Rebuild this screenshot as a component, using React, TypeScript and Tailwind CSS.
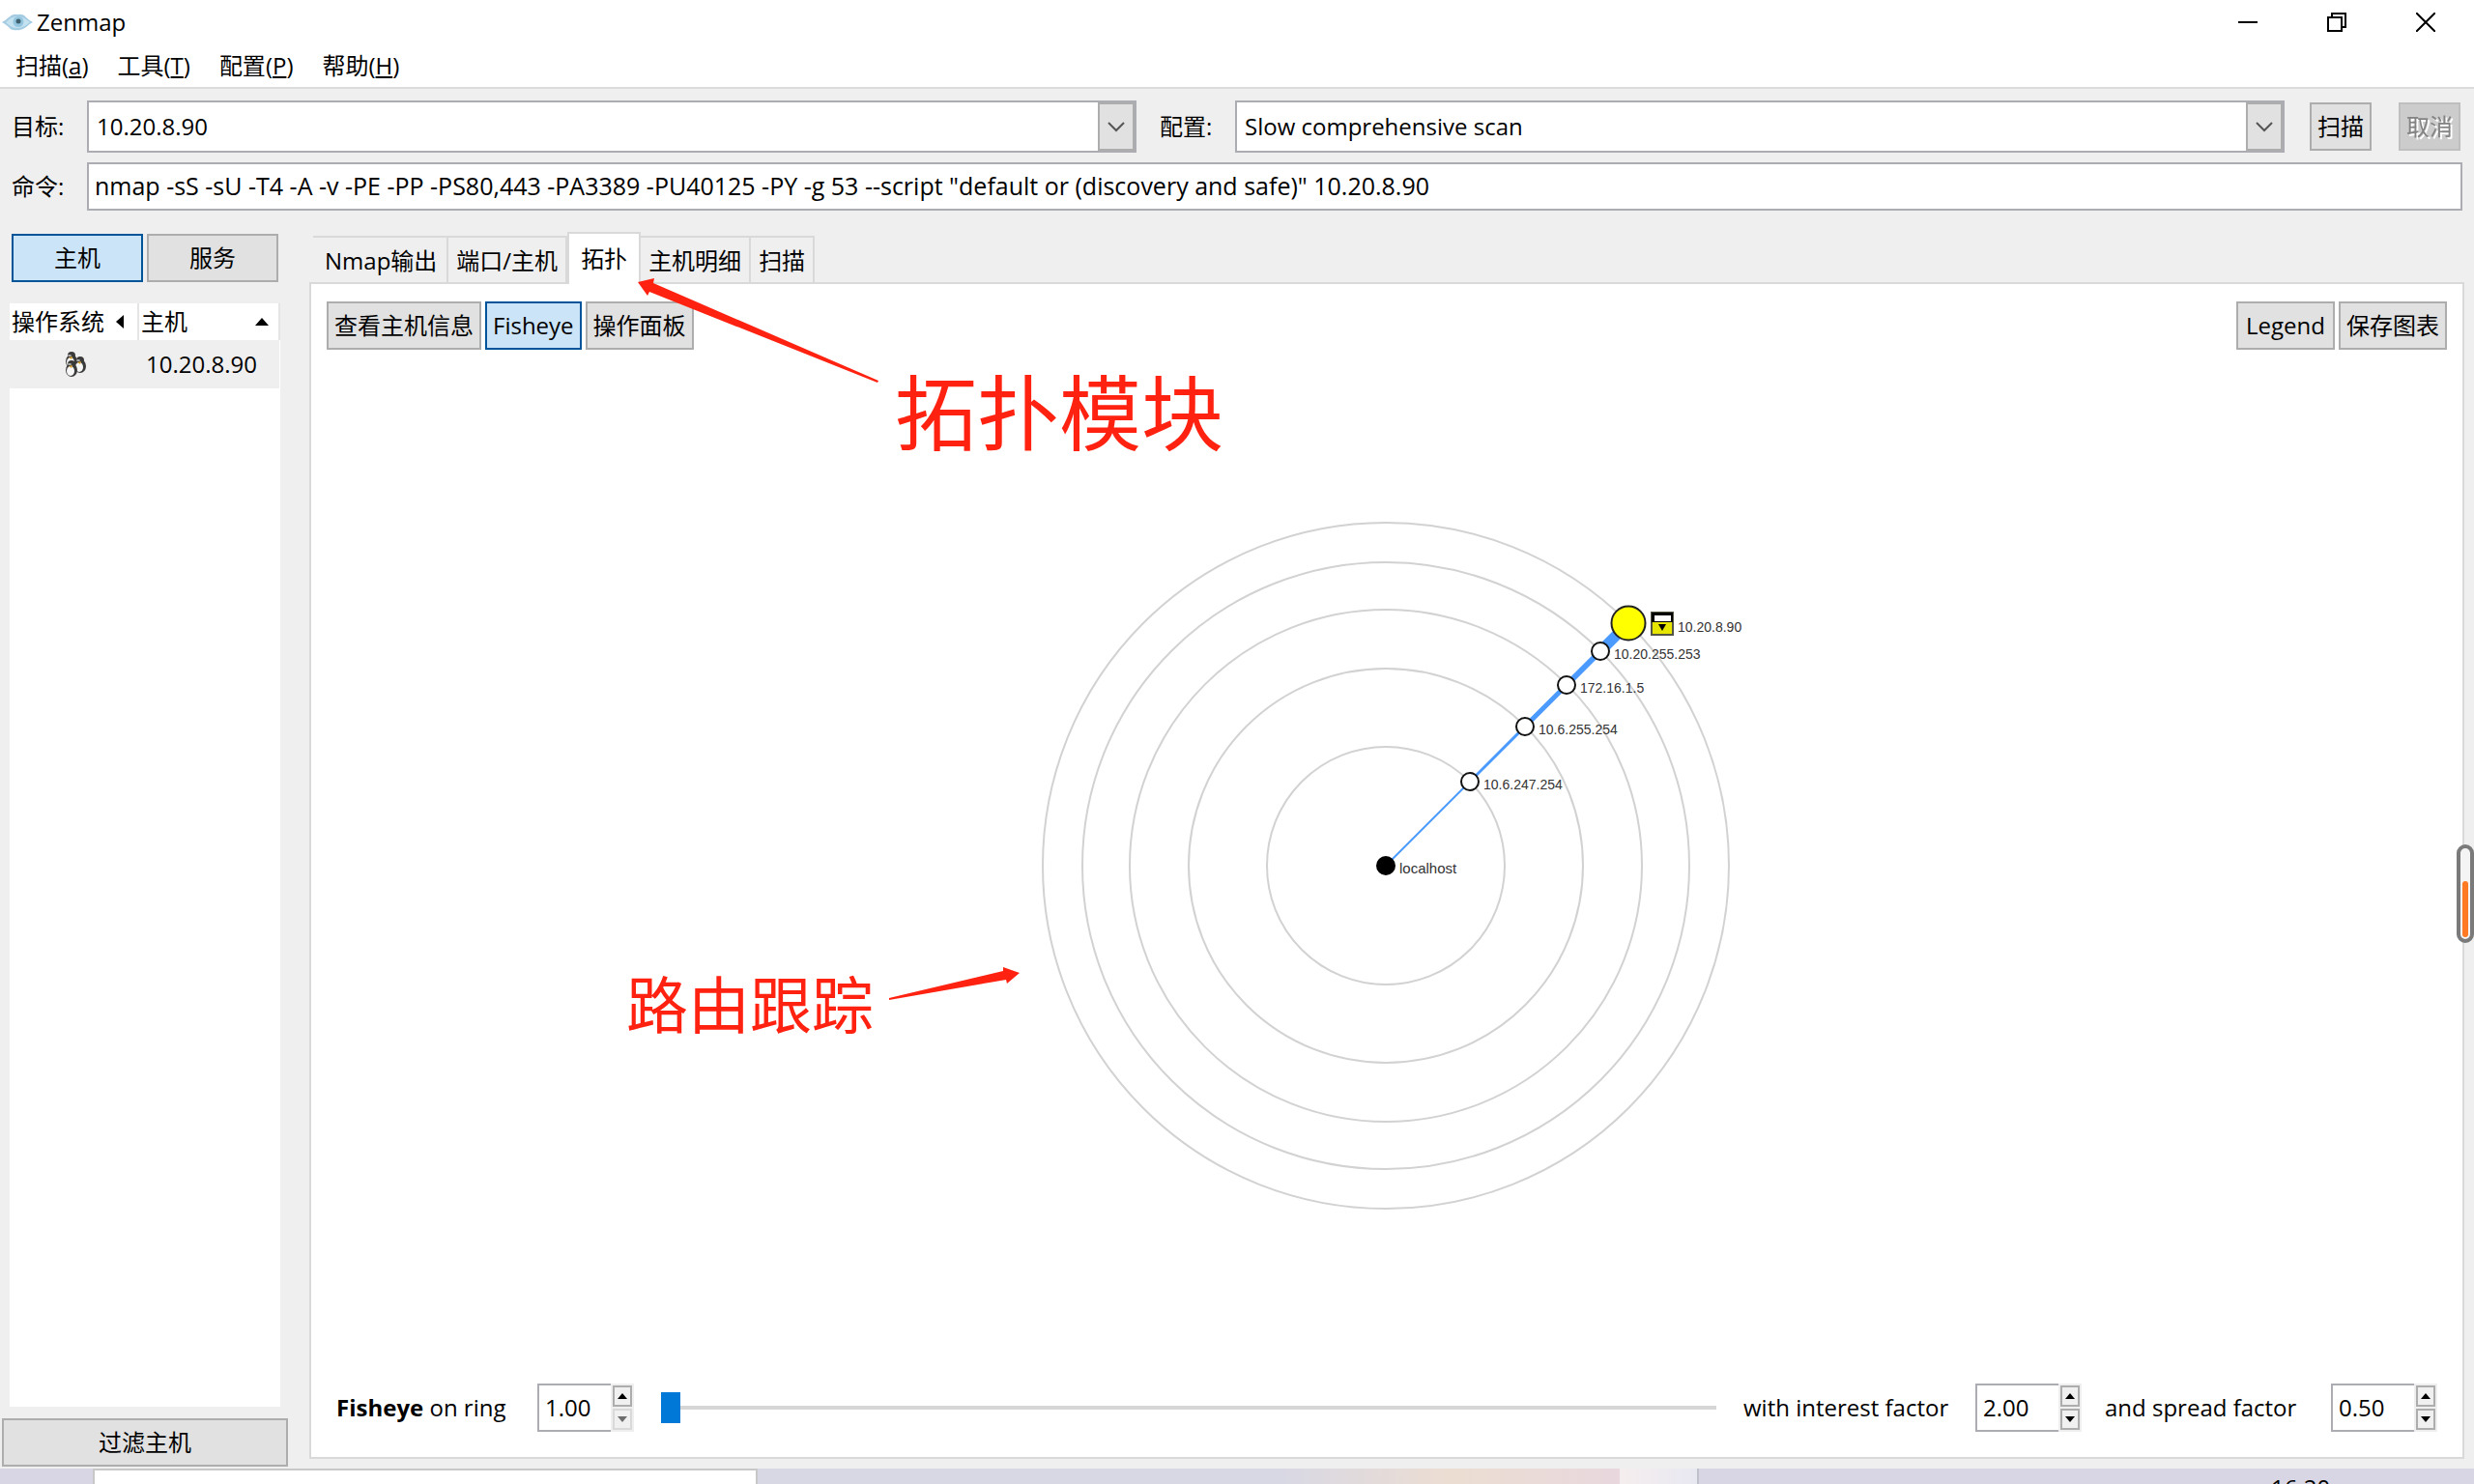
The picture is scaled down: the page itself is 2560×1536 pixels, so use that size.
import { useState, type ReactNode } from 'react';

type MenuItem = { label: string; accessKey: string };

const menus: MenuItem[] = [
  { label: '扫描', accessKey: 'a' },
  { label: '工具', accessKey: 'T' },
  { label: '配置', accessKey: 'P' },
  { label: '帮助', accessKey: 'H' },
];

const tabs = ['Nmap输出', '端口/主机', '拓扑', '主机明细', '扫描'];

const rings = [123, 204, 265, 314, 355];

const hops = [
  { name: '10.6.247.254', at: 87, width: 2 },
  { name: '10.6.255.254', at: 144, width: 3 },
  { name: '172.16.1.5', at: 187, width: 5 },
  { name: '10.20.255.253', at: 222, width: 6 },
];

function EyeIcon() {
  return (
    <svg viewBox="0 0 32 18" className="h-[18px] w-8" aria-hidden="true">
      <path d="M0 9 Q4 7 7 4 Q11 0 16 1 Q22 0 25 4 Q28 7 32 9 Q28 11 25 14 Q20 18 16 17 Q10 18 7 14 Q4 11 0 9Z" fill="#a3cbe2" />
      <path d="M4 9 Q10 3 16 3 Q22 3 29 9 Q22 15 16 15 Q9 15 4 9Z" fill="#c5e2f0" />
      <circle cx="17" cy="8.500" r="5.500" fill="#93c5de" />
      <circle cx="17" cy="8" r="2.500" fill="#3f606e" />
    </svg>
  );
}

function Penguin({ x, y }: { x: number; y: number }) {
  return (
    <g transform={`translate(${x} ${y})`}>
      <ellipse cx="6" cy="10" rx="6" ry="7" fill="#3a3a3a" />
      <circle cx="6" cy="4" r="4" fill="#3a3a3a" />
      <ellipse cx="5" cy="11" rx="4" ry="5" fill="#f6f6f6" />
      <ellipse cx="4" cy="4" rx="2" ry="1" fill="#b5b5b5" />
      <path d="M3 6 L7 5 L6 8Z" fill="#d8a22a" />
    </g>
  );
}

function PenguinsIcon() {
  return (
    <svg viewBox="0 0 26 28" className="h-7 w-[26px]" role="img" aria-label="Linux">
      <Penguin x={4} y={1} />
      <Penguin x={13} y={6} />
      <Penguin x={4} y={10} />
    </svg>
  );
}

function PushButton({ children, active = false, className = '' }: { children: ReactNode; active?: boolean; className?: string }) {
  return (
    <button
      type="button"
      aria-pressed={active}
      className={`flex h-[50px] items-center justify-center border-2 whitespace-nowrap ${
        active ? 'border-[#005499] bg-[#cce4f7]' : 'border-[#adadad] bg-[#e1e1e1]'
      } ${className}`}
    >
      {children}
    </button>
  );
}

function DropArrow() {
  return (
    <svg viewBox="0 0 18 12" className="h-3 w-[18px]" aria-hidden="true">
      <path d="M1 2 L9 10 L17 2" fill="none" stroke="#555555" strokeWidth="2" />
    </svg>
  );
}

function Spinner({ label, initial, wide = false, atMinimum = false }: { label: string; initial: string; wide?: boolean; atMinimum?: boolean }) {
  const [value, setValue] = useState(initial);
  const step = (by: number) => setValue((Number(value) + by).toFixed(2));
  return (
    <div className={`flex h-[50px] bg-[#efefef] ${wide ? 'w-[110px]' : 'w-[100px]'}`}>
      <input
        type="text"
        inputMode="decimal"
        aria-label={label}
        value={value}
        onChange={(e) => setValue(e.target.value)}
        className="min-w-0 flex-1 border-2 border-r-0 border-[#abadb3] bg-white pl-1.5 outline-none"
      />
      <div className="flex w-6 flex-col gap-0.5 py-0.5 pr-0.5 pl-0.5">
        <button type="button" aria-label={`Increase ${label}`} onClick={() => step(0.01)} className="flex flex-1 items-center justify-center border-2 border-[#adadad] bg-[#f0f0f0]">
          <svg viewBox="0 0 10 6" className="h-1.5 w-2.5" aria-hidden="true"><path d="M5 0 L10 6 L0 6Z" fill="#000000" /></svg>
        </button>
        <button
          type="button"
          aria-label={`Decrease ${label}`}
          disabled={atMinimum}
          onClick={() => step(-0.01)}
          className={`flex flex-1 items-center justify-center border-2 bg-[#f0f0f0] ${atMinimum ? 'border-[#d9d9d9] text-[#6d6d6d]' : 'border-[#adadad] text-black'}`}
        >
          <svg viewBox="0 0 10 6" className="h-1.5 w-2.5" aria-hidden="true"><path d="M0 0 L10 0 L5 6Z" fill="currentColor" /></svg>
        </button>
      </div>
    </div>
  );
}

function TopologyGraph() {
  return (
    <svg viewBox="-370 -370 740 740" className="size-[740px] shrink-0 overflow-visible" role="img" aria-label="Network topology">
      {rings.map((r) => (
        <circle key={r} r={r} fill="none" stroke="#d2d2d2" strokeWidth="2" />
      ))}
      {hops.map((hop, i) => {
        const from = i === 0 ? 0 : hops[i - 1].at;
        return <line key={hop.name} x1={from} y1={-from} x2={hop.at} y2={-hop.at} stroke="#4a9aff" strokeWidth={hop.width} />;
      })}
      <line x1="222" y1="-222" x2="251" y2="-251" stroke="#4a9aff" strokeWidth="11" />
      <circle r="10" fill="#000000" />
      {hops.map((hop) => (
        <circle key={hop.name} cx={hop.at} cy={-hop.at} r="9" fill="#ffffff" stroke="#111111" strokeWidth="2" />
      ))}
      <circle cx="251" cy="-251" r="17.500" fill="#ffff00" stroke="#222222" strokeWidth="2" />
      <g transform="translate(274 -263)">
        <rect width="24" height="25" fill="#555544" />
        <rect x="1" y="1" width="22" height="10" fill="#000000" />
        <rect x="4" y="4" width="17" height="6" fill="#ffffff" />
        <rect x="2" y="11" width="20" height="12" fill="#e6e600" />
        <path d="M8 13 L16 13 L12 20Z" fill="#000000" />
      </g>
      <g className="fill-[#333333] font-['Liberation_Sans'] text-[14px]">
        <text x="14" y="8" className="text-[15px]">localhost</text>
        {hops.map((hop) => (
          <text key={hop.name} x={hop.at + 14} y={8 - hop.at}>{hop.name}</text>
        ))}
        <text x="302" y="-242">10.20.8.90</text>
      </g>
    </svg>
  );
}

export default function App() {
  const [target, setTarget] = useState('10.20.8.90');
  const [command, setCommand] = useState(
    'nmap -sS -sU -T4 -A -v -PE -PP -PS80,443 -PA3389 -PU40125 -PY -g 53 --script "default or (discovery and safe)" 10.20.8.90',
  );
  const [ring, setRing] = useState(1);

  return (
    <div className="relative flex h-screen flex-col overflow-hidden bg-[#efefef] font-['Open_Sans','Noto_Sans_CJK_SC',sans-serif] text-[24px] leading-8 text-black">
      <header className="border-b-2 border-[#dcdcdc] bg-white">
        <div className="flex h-[46px] items-center justify-between pr-1 pl-0.5">
          <h1 className="flex items-center gap-1"><EyeIcon />Zenmap</h1>
          <div className="flex h-full">
            <button type="button" aria-label="Minimize" className="flex w-[92px] items-center justify-center">
              <svg viewBox="0 0 20 20" className="size-5"><path d="M0 10 H20" stroke="#000000" strokeWidth="2" /></svg>
            </button>
            <button type="button" aria-label="Restore" className="flex w-[92px] items-center justify-center">
              <svg viewBox="0 0 20 20" className="size-5"><path d="M1 5 H15 V19 H1Z M5 5 V1 H19 V15 H15" fill="none" stroke="#000000" strokeWidth="2" /></svg>
            </button>
            <button type="button" aria-label="Close" className="flex w-[92px] items-center justify-center">
              <svg viewBox="0 0 20 20" className="size-5"><path d="M0 0 L20 20 M20 0 L0 20" stroke="#000000" strokeWidth="2" /></svg>
            </button>
          </div>
        </div>
        <nav className="flex h-11 items-center gap-[30px] px-4">
          {menus.map((m) => (
            <button key={m.label} type="button" className="whitespace-nowrap">
              {m.label}(<span className="underline underline-offset-2">{m.accessKey}</span>)
            </button>
          ))}
        </nav>
      </header>

      <form className="flex flex-col gap-2.5 pt-3 pr-3 pb-[22px]" onSubmit={(e) => e.preventDefault()}>
        <div className="flex h-[54px] items-center">
          <label htmlFor="target" className="w-[90px] shrink-0 pl-3">目标:</label>
          <div className="h-full min-w-0 flex-1">
            <div className="flex h-full border-2 border-[#abadb3] bg-white">
              <input id="target" value={target} onChange={(e) => setTarget(e.target.value)} className="min-w-0 flex-1 pl-2 outline-none" />
              <button type="button" aria-label="Recent targets" className="flex w-[38px] items-center justify-center border-2 border-[#adadad] bg-[#e1e1e1]">
                <DropArrow />
              </button>
            </div>
          </div>
          <label htmlFor="profile" className="w-[102px] shrink-0 pl-6">配置:</label>
          <div className="relative h-full min-w-0 flex-1">
            <select id="profile" className="h-full w-full appearance-none border-2 border-[#abadb3] bg-white pl-2 outline-none">
              <option>Slow comprehensive scan</option>
            </select>
            <span className="pointer-events-none absolute inset-y-0.5 right-0.5 flex w-[38px] items-center justify-center border-2 border-[#adadad] bg-[#e1e1e1]">
              <DropArrow />
            </span>
          </div>
          <PushButton className="ml-[26px] w-16">扫描</PushButton>
          <button type="button" disabled className="mr-0.5 ml-7 flex h-[50px] w-16 items-center justify-center border-2 border-[#bfbfbf] bg-[#cccccc] whitespace-nowrap text-[#838383]">
            <span className="drop-shadow-[2px_2px_0_#ffffff]">取消</span>
          </button>
        </div>
        <div className="flex h-[50px] items-center">
          <label htmlFor="command" className="w-[90px] shrink-0 pl-3">命令:</label>
          <input id="command" value={command} onChange={(e) => setCommand(e.target.value)} className="h-full min-w-0 flex-1 border-2 border-[#abadb3] bg-white pb-0.5 pl-1.5 text-[25px] outline-none" />
        </div>
      </form>

      <main className="flex min-h-0 flex-1">
        <aside className="flex w-[298px] shrink-0 flex-col pt-0.5 pb-0.5 pl-0.5">
          <div className="flex gap-1 pr-2.5 pl-2.5">
            <PushButton active className="flex-1">主机</PushButton>
            <PushButton className="flex-1">服务</PushButton>
          </div>
          <div className="mt-[22px] mr-2 mb-3 ml-2 flex-1 bg-white">
            <table className="w-full table-fixed">
              <thead>
                <tr className="h-[38px]">
                  <th scope="col" className="w-[133px] border-r-2 border-[#e5e5e5] p-0 pl-0.5 font-normal">
                    <div className="flex items-center justify-between pr-3.5 whitespace-nowrap">
                      操作系统
                      <svg viewBox="0 0 8 14" className="h-3.5 w-2" aria-hidden="true"><path d="M8 0 V14 L0 7Z" fill="#000000" /></svg>
                    </div>
                  </th>
                  <th scope="col" className="border-r-2 border-[#e5e5e5] p-0 pl-0.5 font-normal">
                    <div className="flex items-center justify-between pr-2.5">
                      主机
                      <svg viewBox="0 0 14 8" className="h-2 w-3.5" aria-hidden="true"><path d="M0 8 H14 L7 0Z" fill="#000000" /></svg>
                    </div>
                  </th>
                </tr>
              </thead>
              <tbody>
                <tr className="h-[50px] bg-[#efefef]">
                  <td className="p-0"><div className="flex justify-center"><PenguinsIcon /></div></td>
                  <td className="p-0 pl-2">10.20.8.90</td>
                </tr>
              </tbody>
            </table>
          </div>
          <PushButton>过滤主机</PushButton>
        </aside>

        <section className="relative ml-[22px] flex min-w-0 flex-1 flex-col pr-2.5 pb-2.5">
          <div role="tablist" className="-mb-0.5 flex h-[54px] items-end pl-1">
            {tabs.map((t) => (
              <button
                key={t}
                type="button"
                role="tab"
                aria-selected={t === '拓扑'}
                className={
                  t === '拓扑'
                    ? 'relative h-[54px] border-2 border-b-0 border-[#d9d9d9] bg-white px-3 whitespace-nowrap'
                    : 'h-[50px] border-t-2 border-r-2 border-[#d9d9d9] bg-[#efefef] px-2 whitespace-nowrap first:pr-2.5 first:pl-3'
                }
              >
                {t}
              </button>
            ))}
          </div>
          <div role="tabpanel" className="flex min-h-0 flex-1 flex-col border-2 border-[#d9d9d9] bg-white">
            <div className="flex justify-between px-4 pt-[18px]">
              <div className="flex gap-1">
                <PushButton className="px-1.5">查看主机信息</PushButton>
                <PushButton active className="px-1.5">Fisheye</PushButton>
                <PushButton className="px-1.5">操作面板</PushButton>
              </div>
              <div className="flex gap-1">
                <PushButton className="px-2">Legend</PushButton>
                <PushButton className="px-1.5">保存图表</PushButton>
              </div>
            </div>
            <div className="flex min-h-0 flex-1 items-center justify-center pr-0.5 pb-0.5">
              <TopologyGraph />
            </div>
            <div className="flex items-center pr-[26px] pb-[26px] pl-[26px]">
              <label htmlFor="ring" className="w-[208px] shrink-0 whitespace-nowrap"><b className="font-bold">Fisheye</b> on ring</label>
              <Spinner label="ring" initial="1.00" atMinimum />
              <input
                id="ring"
                type="range"
                min={1}
                max={10}
                value={ring}
                onChange={(e) => setRing(Number(e.target.value))}
                className="mx-7 h-8 min-w-0 flex-1 appearance-none bg-transparent [&::-webkit-slider-runnable-track]:h-1 [&::-webkit-slider-runnable-track]:bg-[#d6d6d6] [&::-webkit-slider-thumb]:-mt-3.5 [&::-webkit-slider-thumb]:h-8 [&::-webkit-slider-thumb]:w-5 [&::-webkit-slider-thumb]:appearance-none [&::-webkit-slider-thumb]:bg-[#0078d7]"
              />
              <span className="w-60 shrink-0 whitespace-nowrap">with interest factor</span>
              <Spinner label="interest factor" initial="2.00" wide />
              <span className="ml-6 w-[234px] shrink-0 whitespace-nowrap">and spread factor</span>
              <Spinner label="spread factor" initial="0.50" wide />
            </div>
          </div>

          <div className="pointer-events-none absolute top-12 left-[340px] flex text-[#ff2211]">
            <svg viewBox="0 0 250 110" className="h-[110px] w-[250px]" aria-hidden="true">
              <path d="M0 4 L17 0 L16 5 L249 106 L248 108 L12 14 L10 18Z" fill="currentColor" />
            </svg>
            <p className="mt-[91px] ml-4 text-[85px] leading-[96px] whitespace-nowrap">拓扑模块</p>
          </div>
          <div className="pointer-events-none absolute top-[760px] left-[328px] flex text-[#ff2211]">
            <p className="text-[64px] leading-[80px] whitespace-nowrap">路由跟踪</p>
            <svg viewBox="0 0 136 34" className="mt-px ml-4 h-[34px] w-[136px]" aria-hidden="true">
              <path d="M0 32 L118 4 L118 0 L135 6 L122 17 L121 13 L0 34Z" fill="currentColor" />
            </svg>
          </div>
        </section>
      </main>

      <footer className="flex h-4 shrink-0 overflow-hidden bg-[#d8d6e4]">
        <div className="w-24 shrink-0" />
        <div className="w-[688px] shrink-0 border-2 border-b-0 border-[#c8c8c8] bg-white" />
        <div className="flex flex-1">
          <div className="flex-1 bg-[#d8d8e4]" />
          <div className="w-[350px] bg-linear-to-r from-[#d8d8e4] via-[#ecddd2] to-[#e8d8de]" />
          <div className="w-20 bg-linear-to-r from-[#f5eeee] to-[#e8e8f2]" />
        </div>
        <div className="flex w-[804px] shrink-0 border-l-2 border-[#c0c0ca]">
          <div className="flex-1" />
          <time className="w-[210px] pt-2 text-[24px] leading-6">16:20</time>
        </div>
      </footer>

      <div role="presentation" className="absolute top-[874px] right-0 flex h-[102px] w-[18px] items-end rounded-full border-4 border-[#7a7a7a] bg-[#f4f4f4] px-0.5 pb-0.5">
        <div className="h-[58px] w-full rounded-full bg-[#ff7a22]" />
      </div>
    </div>
  );
}
